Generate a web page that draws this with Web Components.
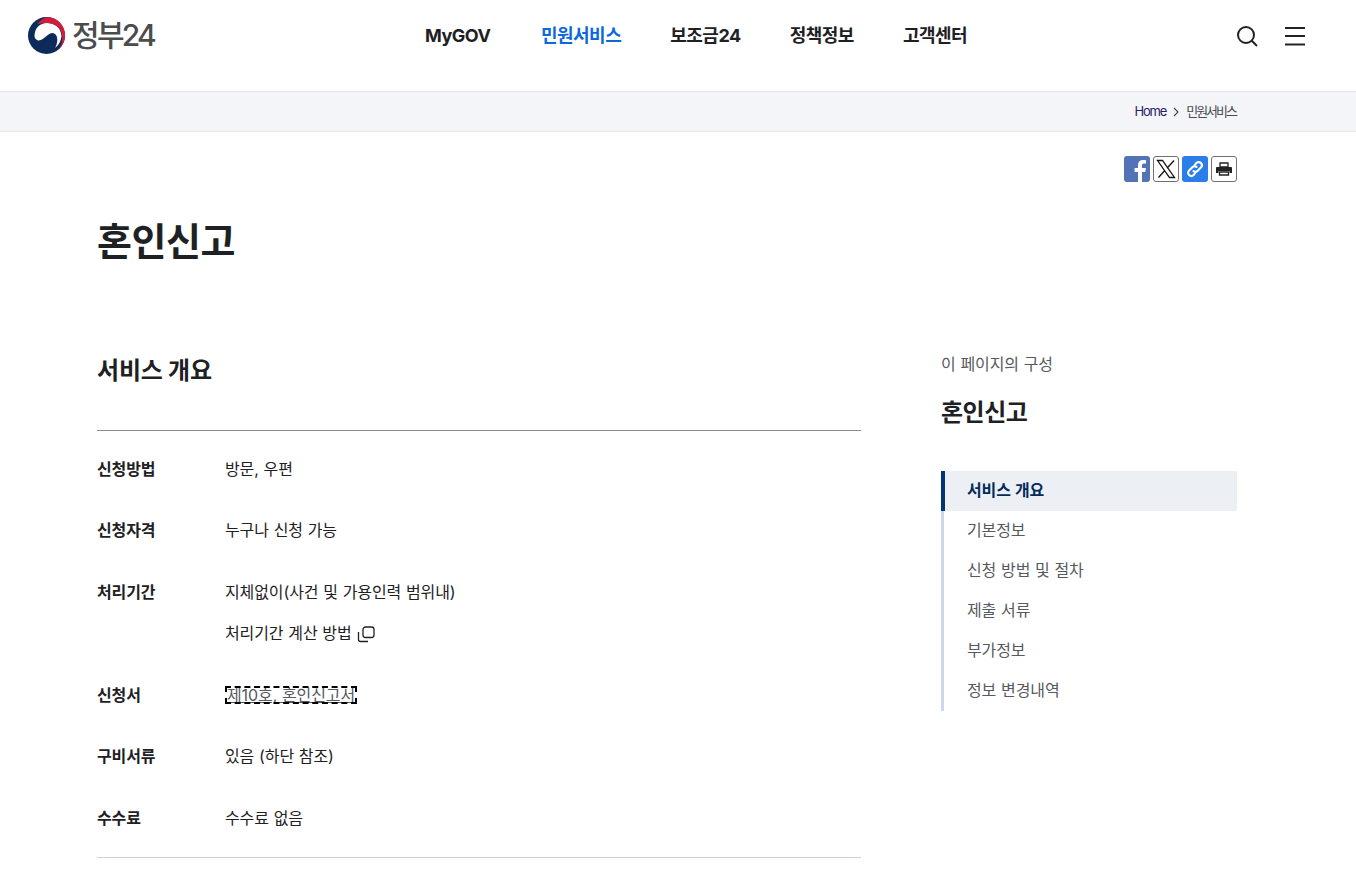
<!doctype html>
<html lang="ko">
<head>
<meta charset="utf-8">
<title>혼인신고</title>
<style>
  html, body { margin: 0; padding: 0; background: #fff; }
  body {
    font-family: Inter, "Noto Sans CJK KR", sans-serif;
    color: #1e2124;
    height: 887px;
    overflow: hidden;
  }
</style>
</head>
<body>

<gov-header>
  <nav-link>MyGOV</nav-link>
  <nav-link active>민원서비스</nav-link>
  <nav-link>보조금24</nav-link>
  <nav-link>정책정보</nav-link>
  <nav-link>고객센터</nav-link>
</gov-header>

<gov-breadcrumb current="민원서비스"></gov-breadcrumb>

<page-wrap>
  <share-bar slot="top"></share-bar>
  <page-title slot="top">혼인신고</page-title>

  <info-section heading="서비스 개요">
    <info-row label="신청방법">방문, 우편</info-row>
    <info-row label="신청자격">누구나 신청 가능</info-row>
    <info-row label="처리기간">
      <div>지체없이(사건 및 가용인력 범위내)</div>
      <calc-link>처리기간 계산 방법</calc-link>
    </info-row>
    <info-row label="신청서"><form-link>제10호, 혼인신고서</form-link></info-row>
    <info-row label="구비서류">있음 (하단 참조)</info-row>
    <info-row label="수수료">수수료 없음</info-row>
  </info-section>

  <side-toc slot="side" caption="이 페이지의 구성" heading="혼인신고">
    <toc-item active>서비스 개요</toc-item>
    <toc-item>기본정보</toc-item>
    <toc-item>신청 방법 및 절차</toc-item>
    <toc-item>제출 서류</toc-item>
    <toc-item>부가정보</toc-item>
    <toc-item>정보 변경내역</toc-item>
  </side-toc>
</page-wrap>

<script>
// small helper, every element below just sets its shadow markup once
class Base extends HTMLElement {
  constructor() {
    super();
    this.attachShadow({mode: 'open'}).innerHTML = this.render();
  }
  render() { return ''; }
}

class GovHeader extends Base {
  render() {
    return `
      <style>
        :host { display: block; height: 91px; background: #fff; }
        .bar { display: flex; align-items: flex-start; height: 100%; }
        .logo {
          display: flex; align-items: center; gap: 7px;
          width: 425px; box-sizing: border-box;
          padding: 17px 0 0 28px;
        }
        .logo span {
          font: 500 30px/36px Inter, "Noto Sans CJK KR", sans-serif;
          color: #4a4c4e; letter-spacing: -2.7px;
          margin-top: -2px;
        }
        nav { display: flex; gap: 49px; padding-top: 23px; flex: 1; }
        .tools { display: flex; gap: 24px; padding: 25px 48px 0 0; }
        svg { display: block; }
      </style>
      <div class="bar">
        <a class="logo">
          <svg width="37" height="37" viewBox="0 0 37 37">
            <circle cx="18.500" cy="18.500" r="18.500" fill="#0b2c5a"/>
            <path d="M6.500 19C6.500 11 12 6 19 6c8 0 14 5 14.500 13-.5 5-2.500 9-6.500 12 3-5 3-12 0-14-3-2.500-6 0-8.500 2-2.500 2-5.500 5-8.500 4.500C8 23 6.500 21 6.500 19z" fill="#fff"/>
            <path d="M9 7.500C12 3 16 .6 20 .1A18.400 18.400 0 0 1 28.500 34 16.500 16.500 0 0 0 34 19C33.500 11 27 6 19 6c-4 0-7 .5-10 1.500z" fill="#cd1f3c"/>
          </svg>
          <span>정부24</span>
        </a>
        <nav><slot></slot></nav>
        <div class="tools">
          <svg width="24" height="24" viewBox="0 0 24 24" fill="none" stroke="#222" stroke-width="2">
            <circle cx="10" cy="10" r="8"/><path d="M15.800 15.800L21 21"/>
          </svg>
          <svg width="24" height="24" viewBox="0 0 24 24" fill="#222">
            <rect x="1" y="2" width="20" height="2"/><rect x="1" y="10" width="20" height="2"/><rect x="1" y="18.500" width="20" height="2"/>
          </svg>
        </div>
      </div>`;
  }
}

class NavLink extends Base {
  render() {
    return `
      <style>
        :host {
          display: block;
          font: 700 18px/26px Inter, "Noto Sans CJK KR", sans-serif;
          color: #1e2124; letter-spacing: -.5px;
        }
        :host(:first-child) { margin-right: 1.500px; }
        :host([active]) { color: #0b68dd; }
      </style>
      <slot></slot>`;
  }
}

class GovBreadcrumb extends Base {
  render() {
    return `
      <style>
        :host {
          display: block; height: 39px;
          background: #f4f5f9;
          border-top: 1px solid #e6e8ec;
          border-bottom: 1px solid #e6e8ec;
        }
        .in {
          display: flex; justify-content: flex-end; align-items: center; gap: 6px;
          width: 1140px; height: 100%; margin: -1px auto 0 97px;
          font: 400 13px/18px Inter, "Noto Sans CJK KR", sans-serif;
          letter-spacing: -1.200px;
        }
        .home { color: #2c1a66; }
        .cur { color: #4a4c4e; letter-spacing: -2px; margin-right: 1px; }
        svg { display: block; margin-top: 3px; }
      </style>
      <div class="in">
        <span class="home">Home</span>
        <svg width="8" height="10" viewBox="0 0 8 10" fill="none" stroke="#444" stroke-width="1.100"><path d="M2 1l4 4-4 4"/></svg>
        <span class="cur">${this.getAttribute('current')}</span>
      </div>`;
  }
}

class PageWrap extends Base {
  render() {
    return `
      <style>
        :host { display: block; width: 1140px; margin-left: 97px; }
        .cols { display: flex; gap: 80px; margin-top: 80px; }
        .main { width: 764px; }
        .side { width: 296px; }
      </style>
      <slot name="top"></slot>
      <div class="cols">
        <div class="main"><slot></slot></div>
        <div class="side"><slot name="side"></slot></div>
      </div>`;
  }
}

class ShareBar extends Base {
  render() {
    return `
      <style>
        :host { display: flex; justify-content: flex-end; gap: 3px; padding-top: 24px; }
        .b { width: 26px; height: 26px; box-sizing: border-box; border-radius: 3px; overflow: hidden; }
        .line { border: 1px solid #6e7073; background: #fff; }
        svg { display: block; width: 100%; height: 100%; }
      </style>
      <div class="b" style="background:#5273b5">
        <svg viewBox="0 0 26 26"><path d="M18 26V16h3.300l.6-4H18V9.600c0-1.200.5-2 2-2h2V4.200C21.400 4.100 20.300 4 19 4c-3 0-5 1.800-5 5.100V12h-3.400v4H14v10z" fill="#fff"/></svg>
      </div>
      <div class="b line">
        <svg viewBox="0 0 24 24"><path d="M3.500 3.500h5l12 17h-5zM20 3.500l-7 7.800M11 13.300l-6.500 7.200" fill="none" stroke="#111" stroke-width="1.300"/></svg>
      </div>
      <div class="b" style="background:#2b7de9">
        <svg viewBox="0 0 26 26" fill="none" stroke="#fff" stroke-width="2.100" stroke-linecap="round">
          <path d="M11.500 15c1.300 1.300 3 1 4.200-.2l3.200-3.200c1.300-1.300 1.300-3.200 0-4.500s-3.200-1.300-4.500 0l-1.300 1.300"/>
          <path d="M14.500 11c-1.300-1.300-3-1-4.200.2l-3.200 3.200c-1.300 1.300-1.300 3.200 0 4.500s3.200 1.300 4.500 0l1.300-1.300"/>
        </svg>
      </div>
      <div class="b line">
        <svg viewBox="0 0 24 24"><path d="M8 6h8v4H8z" fill="none" stroke="#222" stroke-width="1.300"/><path d="M5 10h14c.5 0 1 .5 1 1v5h-2.500v-2h-11v2H4v-5c0-.5.500-1 1-1z" fill="#222"/><path d="M7.500 15h9v3h-9z" fill="none" stroke="#222" stroke-width="1.300"/></svg>
      </div>`;
  }
}

class PageTitle extends Base {
  render() {
    return `
      <style>
        :host {
          display: block; margin-top: 29px;
          font: 700 38px/60px Inter, "Noto Sans CJK KR", sans-serif;
          color: #1e2124; letter-spacing: -.5px;
        }
      </style>
      <slot></slot>`;
  }
}

class InfoSection extends Base {
  render() {
    return `
      <style>
        :host { display: block; }
        h2 {
          margin: 0; height: 77px; padding-top: 2px;
          font: 700 24px/36px Inter, "Noto Sans CJK KR", sans-serif;
          color: #1e2124; letter-spacing: -.2px;
          border-bottom: 1px solid #8a8c8f;
        }
        .list {
          display: flex; flex-direction: column; gap: 35.800px;
          padding: 26px 0;
          border-bottom: 1px solid #cdd1d5;
        }
      </style>
      <h2>${this.getAttribute('heading')}</h2>
      <div class="list"><slot></slot></div>`;
  }
}

class InfoRow extends Base {
  render() {
    return `
      <style>
        :host {
          display: grid; grid-template-columns: 128px 1fr;
          font: 400 16px/25.600px Inter, "Noto Sans CJK KR", sans-serif;
          color: #1e2124; letter-spacing: -.1px; word-spacing: .4px;
        }
        b { font-weight: 700; }
        .val { display: flex; flex-direction: column; gap: 16px; align-items: flex-start; }
      </style>
      <b>${this.getAttribute('label')}</b>
      <div class="val"><slot></slot></div>`;
  }
}

class CalcLink extends Base {
  render() {
    return `
      <style>
        :host { display: flex; align-items: center; gap: 5px; }
        svg { display: block; margin-top: 1px; }
      </style>
      <slot></slot>
      <svg width="18" height="17" viewBox="0 0 18 17" fill="none" stroke="#222" stroke-width="1.300">
        <rect x="6" y="1" width="11" height="10.500" rx="2.500"/>
        <path d="M1.500 6v7.500c0 1.300.8 2 2 2H11"/>
      </svg>`;
  }
}

class FormLink extends Base {
  render() {
    return `
      <style>
        :host {
          display: inline-block; line-height: 14px;
          margin: 5px 0 0 2px;
          color: #555a60; text-decoration: underline;
          outline: 2px dashed #000;
          outline-offset: 0;
        }
      </style>
      <slot></slot>`;
  }
}

class SideToc extends Base {
  render() {
    return `
      <style>
        :host { display: block; }
        .cap {
          font: 400 16px/24px Inter, "Noto Sans CJK KR", sans-serif;
          color: #555a60; margin-top: 1px; letter-spacing: -.1px; word-spacing: .4px;
        }
        .h {
          font: 700 24px/36px Inter, "Noto Sans CJK KR", sans-serif;
          color: #1e2124; margin-top: 19px; letter-spacing: -.5px;
        }
        ul {
          list-style: none; margin: 40px 0 0; padding: 0;
          border-left: 3px solid #ccd8e6;
        }
      </style>
      <div class="cap">${this.getAttribute('caption')}</div>
      <div class="h">${this.getAttribute('heading')}</div>
      <ul><slot></slot></ul>`;
  }
}

class TocItem extends Base {
  render() {
    return `
      <style>
        :host {
          display: block; height: 40px; padding-left: 23px;
          margin-left: -3px; border-left: 3px solid transparent;
          font: 400 16px/38px Inter, "Noto Sans CJK KR", sans-serif;
          color: #555a60; letter-spacing: -.1px; word-spacing: .4px;
        }
        :host([active]) {
          background: #ecf0f5; border-left: 4px solid #003675;
          padding-left: 22px;
          color: #052b5c; font-weight: 700;
        }
      </style>
      <slot></slot>`;
  }
}

customElements.define('gov-header', GovHeader);
customElements.define('nav-link', NavLink);
customElements.define('gov-breadcrumb', GovBreadcrumb);
customElements.define('page-wrap', PageWrap);
customElements.define('share-bar', ShareBar);
customElements.define('page-title', PageTitle);
customElements.define('info-section', InfoSection);
customElements.define('info-row', InfoRow);
customElements.define('calc-link', CalcLink);
customElements.define('form-link', FormLink);
customElements.define('side-toc', SideToc);
customElements.define('toc-item', TocItem);
</script>
</body>
</html>
